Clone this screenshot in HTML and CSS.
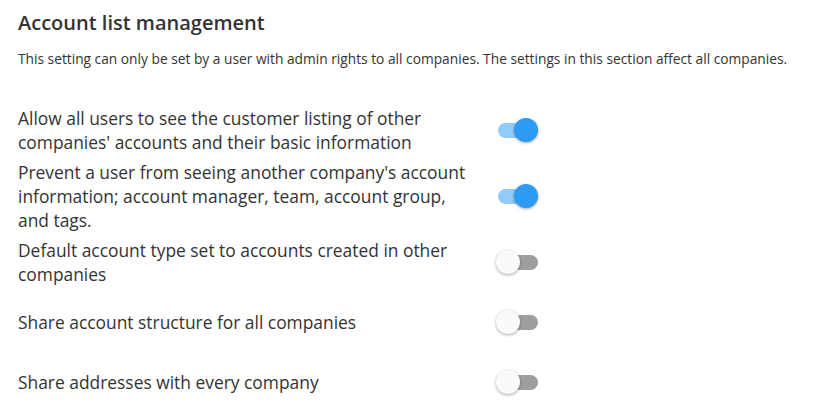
FILE: index.html
```html
<!DOCTYPE html>
<html lang="en">
<head>
    <meta charset="UTF-8">
    <meta name="viewport" content="width=device-width, initial-scale=1.0">
    <title>Account list management</title>
    <link rel="stylesheet" href="styles.css">
</head>
<body>
    <section class="settings">
        <h2 class="settings-title">Account list management</h2>
        <p class="settings-note">This setting can only be set by a user with admin rights to all companies. The settings in this section affect all companies.</p>

        <div class="setting-list">
            <div class="setting-row">
                <span class="setting-label">Allow all users to see the customer listing of other companies' accounts and their basic information</span>
                <label class="toggle on"><input type="checkbox" checked><span class="track"></span><span class="knob"></span></label>
            </div>
            <div class="setting-row">
                <span class="setting-label">Prevent a user from seeing another company's account information; account manager, team, account group, and tags.</span>
                <label class="toggle on"><input type="checkbox" checked><span class="track"></span><span class="knob"></span></label>
            </div>
            <div class="setting-row">
                <span class="setting-label">Default account type set to accounts created in other companies</span>
                <label class="toggle"><input type="checkbox"><span class="track"></span><span class="knob"></span></label>
            </div>
            <div class="setting-row">
                <span class="setting-label">Share account structure for all companies</span>
                <label class="toggle"><input type="checkbox"><span class="track"></span><span class="knob"></span></label>
            </div>
            <div class="setting-row">
                <span class="setting-label">Share addresses with every company</span>
                <label class="toggle"><input type="checkbox"><span class="track"></span><span class="knob"></span></label>
            </div>
        </div>
    </section>
</body>
</html>
```

FILE: styles.css
```css
body { margin: 0; font-family: "Open Sans", "Noto Sans", sans-serif; color: #333; background: #fff; }
.settings { padding: 9px 18px 0; }
.settings-title { margin: 0; font-size: 20px; font-weight: 600; line-height: 28px; color: #333; }
.settings-note { margin: 13px 0 0; font-size: 13.75px; line-height: 18px; color: #333; }
.setting-list { margin-top: 32px; }
.setting-row { display: flex; align-items: center; min-height: 60px; }
.setting-label { width: 456px; font-size: 17.4px; line-height: 24px; }

/* switch */
.toggle { position: relative; display: block; width: 42px; height: 24px; margin-left: 22px; cursor: pointer; }
.toggle input { display: none; }
.toggle .track { position: absolute; left: 2px; right: 0; top: 5px; height: 15px; border-radius: 8px; background: #9e9e9e; }
.toggle .knob { position: absolute; left: 0; top: 0; width: 24px; height: 24px; border-radius: 50%; background: #fafafa; box-shadow: 0 1px 3px rgba(0,0,0,0.35); }
.toggle.on .track { background: #90cbf9; }
.toggle.on .knob { left: auto; right: 0; background: #2d9bf3; }
```
